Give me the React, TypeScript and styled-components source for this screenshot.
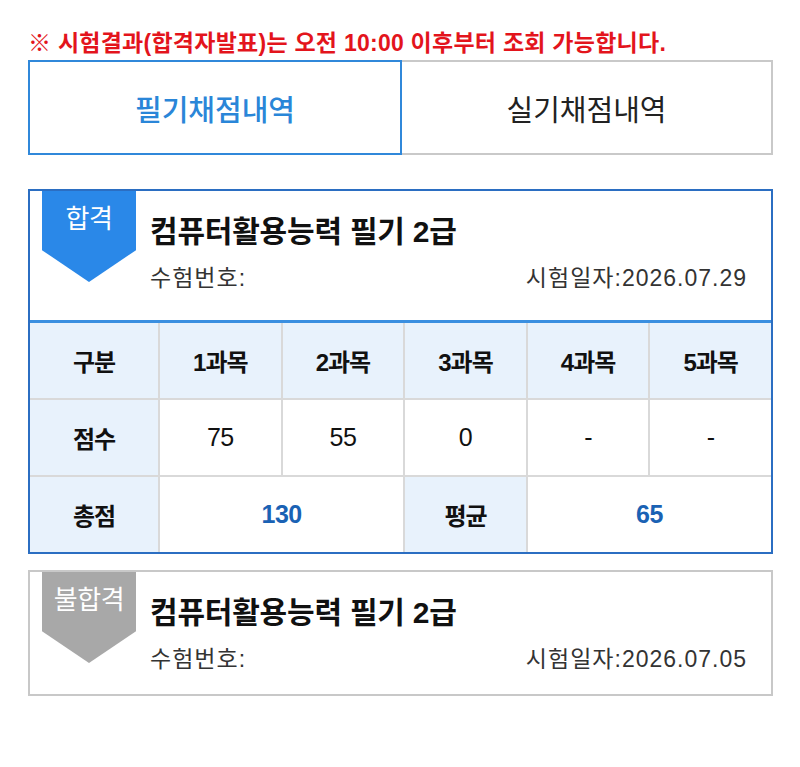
import React from "react";
import styled, { createGlobalStyle } from "styled-components";

const Global = createGlobalStyle`
  html, body { margin: 0; padding: 0; background: #fff; }
  body { font-family: "Liberation Sans", "Noto Sans CJK KR", sans-serif; color: #222; }
  * { box-sizing: border-box; }
`;

const Page = styled.div`
  width: 745px;
  margin-left: 28px;
  padding-top: 31px;
`;

const Notice = styled.p`
  margin: 0 0 5px;
  color: #e3141c;
  font-size: 23px;
  font-weight: 700;
  line-height: 24px;
  letter-spacing: 0.25px;
  white-space: nowrap;
`;

const Tabs = styled.div`
  display: grid;
  grid-template-columns: 374px 1fr;
  height: 95px;
  margin-bottom: 34px;
`;

const Tab = styled.div<{ $active?: boolean }>`
  display: flex;
  align-items: center;
  justify-content: center;
  font-size: 29px;
  font-weight: ${(p) => (p.$active ? 500 : 400)};
  color: ${(p) => (p.$active ? "#2a86d8" : "#222")};
  border: 2px solid ${(p) => (p.$active ? "#3088da" : "#c9c9c9")};
  ${(p) => (p.$active ? "" : "border-left: none;")}
`;

const Card = styled.div<{ $pass?: boolean }>`
  border: 2px solid ${(p) => (p.$pass ? "#2b6ec2" : "#c8c8c8")};
  margin-bottom: 16px;
  background: #fff;
`;

const CardHead = styled.div<{ $h: number }>`
  display: flex;
  gap: 14px;
  padding-left: 12px;
  height: ${(p) => p.$h}px;
`;

const Badge = styled.div<{ $pass?: boolean }>`
  flex: 0 0 94px;
  height: 91px;
  background: ${(p) => (p.$pass ? "#2a88e8" : "#a8a8a8")};
  clip-path: polygon(0 0, 100% 0, 100% 65%, 50% 100%, 0 65%);
  color: #fff;
  font-size: 26px;
  letter-spacing: -0.5px;
  text-align: center;
  line-height: 30px;
  padding-top: 13px;
`;

const Info = styled.div`
  flex: 1;
  padding: 24px 24px 0 0;
`;

const Title = styled.div`
  font-size: 30px;
  font-weight: 700;
  line-height: 34px;
  color: #111;
  letter-spacing: -0.2px;
`;

const Meta = styled.div`
  display: flex;
  justify-content: space-between;
  margin-top: 17px;
  font-size: 23px;
  line-height: 24px;
  color: #333;
  letter-spacing: 1px;
`;

const Table = styled.div`
  display: grid;
  grid-template-columns: 128px repeat(5, 1fr);
  grid-auto-rows: 75px;
  gap: 2px;
  background: #d9d9d9;
  border-top: 3px solid #3a8fe0;
`;

const Cell = styled.div<{ $head?: boolean; $span?: number; $accent?: boolean }>`
  display: flex;
  align-items: center;
  justify-content: center;
  background: ${(p) => (p.$head ? "#e8f2fc" : "#fff")};
  font-size: ${(p) => (p.$head ? "24px" : "25px")};
  font-weight: ${(p) => (p.$head || p.$accent ? 700 : 400)};
  color: ${(p) => (p.$accent ? "#1a62b4" : "#111")};
  letter-spacing: ${(p) => (p.$head ? "-1px" : "-0.5px")};
  ${(p) => (p.$span ? `grid-column: span ${p.$span};` : "")}
`;

type CardProps = {
  pass: boolean;
  date: string;
};

function ResultCard({ pass, date }: CardProps) {
  return (
    <Card $pass={pass}>
      <CardHead $h={pass ? 129 : 122}>
        <Badge $pass={pass}>{pass ? "합격" : "불합격"}</Badge>
        <Info>
          <Title>컴퓨터활용능력 필기 2급</Title>
          <Meta>
            <span>수험번호:</span>
            <span>시험일자:{date}</span>
          </Meta>
        </Info>
      </CardHead>
      {pass && (
        <Table>
          <Cell $head>구분</Cell>
          {["1과목", "2과목", "3과목", "4과목", "5과목"].map((s) => (
            <Cell $head key={s}>
              {s}
            </Cell>
          ))}
          <Cell $head>점수</Cell>
          {["75", "55", "0", "-", "-"].map((s, i) => (
            <Cell key={i}>{s}</Cell>
          ))}
          <Cell $head>총점</Cell>
          <Cell $span={2} $accent>
            130
          </Cell>
          <Cell $head>평균</Cell>
          <Cell $span={2} $accent>
            65
          </Cell>
        </Table>
      )}
    </Card>
  );
}

export default function App() {
  return (
    <Page>
      <Global />
      <Notice>※ 시험결과(합격자발표)는 오전 10:00 이후부터 조회 가능합니다.</Notice>
      <Tabs>
        <Tab $active>필기채점내역</Tab>
        <Tab>실기채점내역</Tab>
      </Tabs>
      <ResultCard pass date="2026.07.29" />
      <ResultCard pass={false} date="2026.07.05" />
    </Page>
  );
}
